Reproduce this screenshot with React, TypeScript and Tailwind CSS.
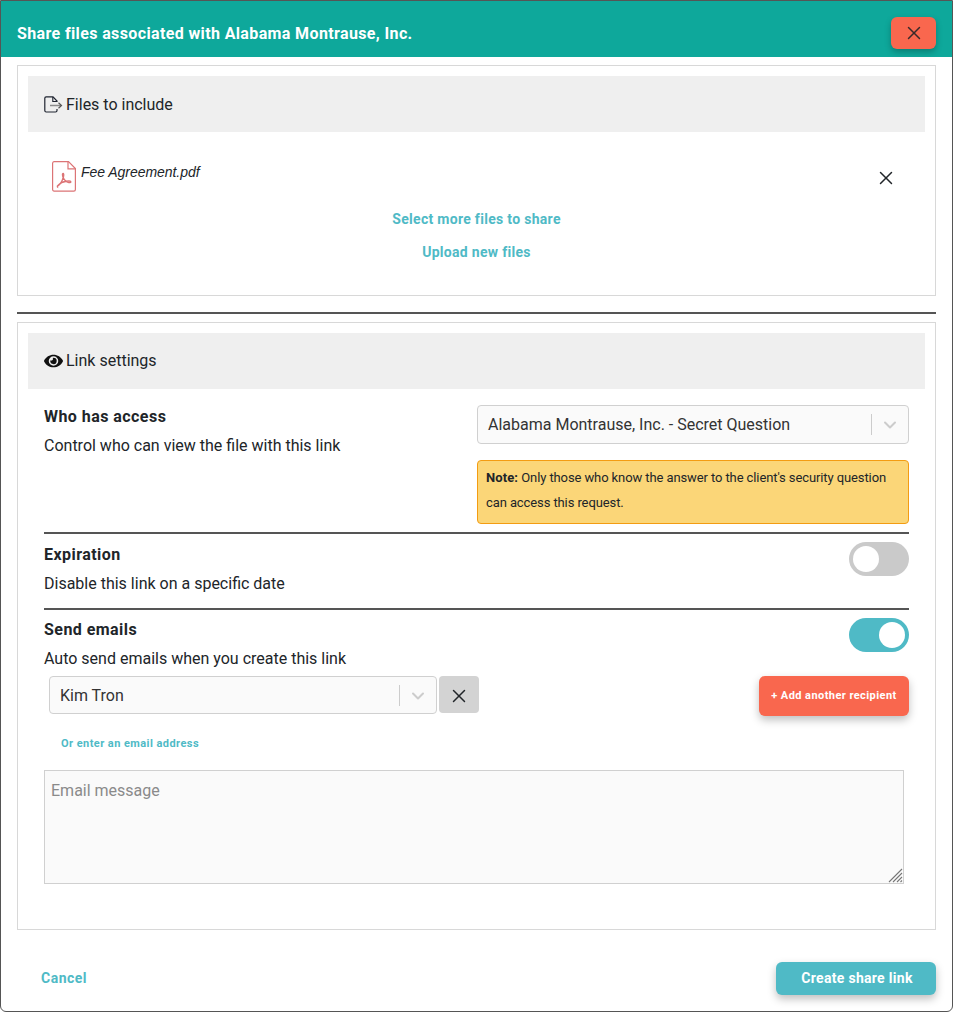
import React, { useState } from "react";
import { X, ChevronDown } from "lucide-react";
import { FaEye } from "react-icons/fa";

function SelectBox({ value, className }: { value: string; className: string }) {
  return (
    <div className={`flex items-center justify-between rounded-[4px] border border-[#d0d0d0] bg-[#fafafa] pl-[10px] ${className}`}>
      <span className="text-[16px] text-[#333]">{value}</span>
      <div className="flex items-center">
        <span className="h-[21px] w-px bg-[#ccc]" />
        <span className="flex w-[36px] justify-center">
          <ChevronDown className="h-[20px] w-[20px] text-[#ccc]" strokeWidth={2.4} />
        </span>
      </div>
    </div>
  );
}

function Toggle({ on }: { on: boolean }) {
  return (
    <div className={`flex h-[34px] w-[60px] items-center rounded-full px-[4px] ${on ? "justify-end bg-[#4fbac6]" : "justify-start bg-[#cacaca]"}`}>
      <span className="h-[26px] w-[26px] rounded-full bg-white" />
    </div>
  );
}

function PdfIcon() {
  return (
    <svg width="24" height="31" viewBox="0 0 24 31" fill="none" stroke="#dc7476" strokeWidth="1.2" className="shrink-0">
      <path d="M2 .7h14.5L23.4 7.6V28.5a1.6 1.6 0 0 1-1.6 1.6H2A1.6 1.6 0 0 1 .6 28.5V2.2A1.6 1.6 0 0 1 2 .7z" />
      <path d="M16 .7v7.2h7.4" />
      <path d="M5.5 25c2.5-1.2 4.8-4.8 6-9.5.4-1.8.2-3-.4-3-.8 0-.8 2 .1 4 1.1 2.6 3 4.4 5.6 5 1.4.3 2.2-.2 2-.8-.3-.7-2-.8-4.3-.4-3.5.6-6.5 2-8.3 3.9-.9 1-1 1.6-.7 1.8z" strokeWidth="1.4" />
    </svg>
  );
}

function FileShareIcon() {
  return (
    <svg width="19" height="17" viewBox="0 0 19 17" fill="none" className="shrink-0">
      <path d="M13 6V5L9 .8H2.2A1.5 1.5 0 0 0 .8 2.3V14.5A1.5 1.5 0 0 0 2.2 16H11.5A1.5 1.5 0 0 0 13 14.5V13" stroke="#1f2430" strokeWidth="1.2" />
      <path d="M8.8 1v4.5H13" stroke="#1f2430" strokeWidth="1.1" />
      <path d="M6 9.5H17" stroke="#8a8a8a" strokeWidth="1.6" />
      <path d="M14.5 6.8L17.5 9.5L14.5 12.2" stroke="#555" strokeWidth="1.2" />
    </svg>
  );
}

export default function App() {
  const [message, setMessage] = useState("");

  return (
    <div className="h-[1012px] w-[953px] overflow-hidden rounded-b-[6px] border border-[#555] bg-white font-['Roboto',sans-serif] text-[#212529]">
      {/* Header */}
      <div className="flex h-[56px] items-center justify-between bg-[#0ea89b] px-[16px] pt-[8px]">
        <h1 className="mt-[2px] text-[16px] font-bold tracking-[0.37px] text-white">Share files associated with Alabama Montrause, Inc.</h1>
        <button className="flex h-[32px] w-[45px] items-center justify-center rounded-[6px] bg-[#f9674e] shadow-[0_3px_6px_rgba(0,0,0,0.25)]">
          <X className="h-[22px] w-[22px] text-[#3a2a2a]" strokeWidth={1.6} />
        </button>
      </div>

      <div className="px-[16px] pt-[8px]">
        {/* Files to include */}
        <section className="h-[231px] border border-[#d8d8d8] px-[10px] pt-[10px]">
          <div className="flex h-[56px] items-center gap-[3px] bg-[#efefef] pl-[16px] pt-[1px] text-[16px]">
            <FileShareIcon />
            <span>Files to include</span>
          </div>
          <div className="flex h-[61px] items-start justify-between pl-[24px] pr-[28px] pt-[29px]">
            <div className="flex items-start gap-[5px]">
              <PdfIcon />
              <span className="pt-[1px] font-['Liberation_Sans',sans-serif] text-[14px] italic leading-[20px] tracking-[-0.05px]">Fee Agreement.pdf</span>
            </div>
            <X className="mt-[6px] h-[22px] w-[22px]" strokeWidth={1.6} />
          </div>
          <div className="mt-[16px] flex flex-col items-center gap-[13px] text-[14px] font-bold tracking-[0.3px] text-[#4fbac6]">
            <a className="leading-[20px]">Select more files to share</a>
            <a className="leading-[20px]">Upload new files</a>
          </div>
        </section>

        <hr className="mb-[8px] mt-[16px] h-[2px] border-0 bg-[#555]" />

        {/* Link settings */}
        <section className="h-[608px] border border-[#d8d8d8] px-[10px] pt-[10px]">
          <div className="flex h-[56px] items-center gap-[3px] bg-[#efefef] pl-[16px] text-[16px]">
            <FaEye className="h-[18px] w-[19px] text-[#111]" />
            <span>Link settings</span>
          </div>

          <div className="px-[16px]">
            {/* Who has access */}
            <div className="flex h-[145px] justify-between border-b-2 border-[#555] pt-[16px]">
              <div>
                <div className="text-[16px] font-bold leading-[24px] tracking-[0.45px]">Who has access</div>
                <div className="mt-[5px] text-[16px] leading-[24px]">Control who can view the file with this link</div>
              </div>
              <div className="w-[432px]">
                <SelectBox value="Alabama Montrause, Inc. - Secret Question" className="h-[39px]" />
                <div className="mt-[16px] h-[64px] rounded-[4px] border border-[#f39c12] bg-[#fbd678] px-[8px] py-[4px] text-[13px] leading-[25px] tracking-[-0.1px]">
                  <b className="tracking-[0.1px]">Note:</b> Only those who know the answer to the client's security question can access this request.
                </div>
              </div>
            </div>

            {/* Expiration */}
            <div className="flex h-[76px] justify-between border-b-2 border-[#555] pt-[8px]">
              <div className="pt-[1px]">
                <div className="text-[16px] font-bold leading-[24px] tracking-[0.45px]">Expiration</div>
                <div className="mt-[5px] text-[16px] leading-[24px]">Disable this link on a specific date</div>
              </div>
              <Toggle on={false} />
            </div>

            {/* Send emails */}
            <div className="flex justify-between pt-[8px]">
              <div>
                <div className="text-[16px] font-bold leading-[24px] tracking-[0.45px]">Send emails</div>
                <div className="mt-[5px] text-[16px] leading-[24px]">Auto send emails when you create this link</div>
              </div>
              <Toggle on={true} />
            </div>

            <div className="mt-[5px] flex items-start justify-between pl-[5px]">
              <div className="flex items-start gap-[2px]">
                <SelectBox value="Kim Tron" className="h-[38px] w-[388px] pt-[1px]" />
                <button className="flex h-[37px] w-[40px] items-center justify-center rounded-[4px] bg-[#d3d3d3] pt-[3px]">
                  <X className="h-[22px] w-[22px]" strokeWidth={1.6} />
                </button>
              </div>
              <button className="h-[40px] w-[150px] rounded-[6px] bg-[#f9674e] pt-[1px] text-[11px] font-bold tracking-[0.43px] text-white shadow-[0_4px_8px_rgba(0,0,0,0.25)]">
                + Add another recipient
              </button>
            </div>

            <div className="mt-[21px] pl-[17px] text-[11px] font-bold leading-[14px] tracking-[0.44px] text-[#4fbac6]">Or enter an email address</div>

            <div className="relative mt-[19px] h-[114px] w-[860px]">
              <textarea
                value={message}
                onChange={(e) => setMessage(e.target.value)}
                placeholder="Email message"
                className="block h-full w-full resize-none border border-[#d0d0d0] bg-[#fafafa] px-[6px] pb-[6px] pt-[8px] text-[16px] leading-[24px] outline-none placeholder:text-[#8a8a8a]"
              />
              {/* resize grip */}
              <svg width="15" height="15" viewBox="0 0 15 15" className="pointer-events-none absolute bottom-[1px] right-[1px]" stroke="#777" strokeWidth="1.1">
                <path d="M1 14L14 1M5 14L14 5M9 14L14 9M12.5 14L14 12.5" />
              </svg>
            </div>
          </div>
        </section>

        {/* Footer */}
        <div className="mt-[32px] flex items-center justify-between pl-[24px]">
          <a className="text-[14px] font-bold tracking-[0.5px] text-[#4fbac6]">Cancel</a>
          <button className="h-[33px] w-[160px] rounded-[6px] bg-[#4fbac6] pl-[2px] text-[14px] font-bold tracking-[0.3px] text-white shadow-[0_4px_8px_rgba(0,0,0,0.25)]">
            Create share link
          </button>
        </div>
      </div>
    </div>
  );
}
